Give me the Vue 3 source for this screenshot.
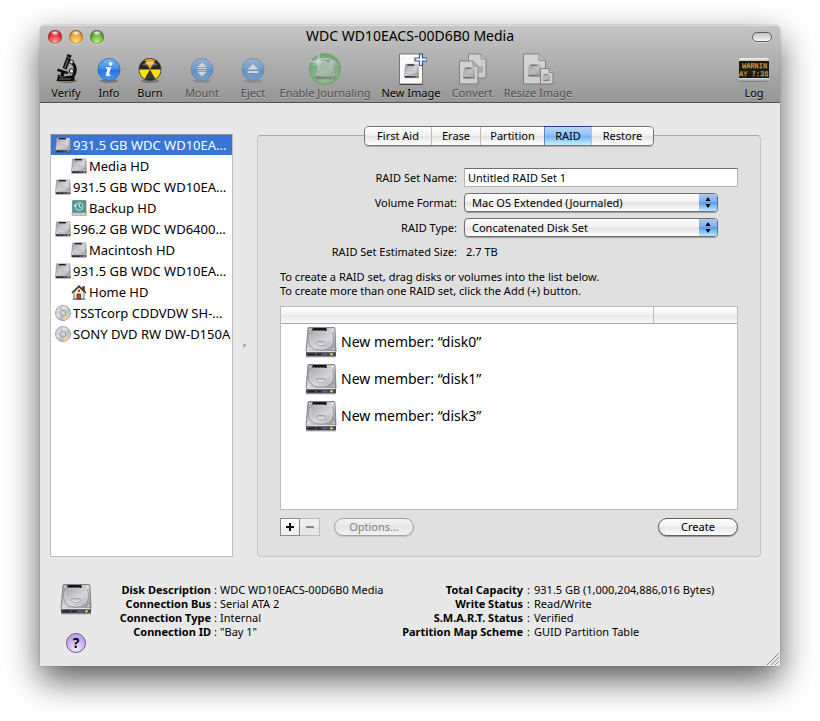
<script setup>
import { ref } from 'vue'

const tools = [
  { id: 'verify', label: 'Verify' },
  { id: 'info', label: 'Info' },
  { id: 'burn', label: 'Burn' },
  { id: 'mount', label: 'Mount', disabled: true },
  { id: 'eject', label: 'Eject', disabled: true },
  { id: 'journal', label: 'Enable Journaling', disabled: true },
  { id: 'newimage', label: 'New Image' },
  { id: 'convert', label: 'Convert', disabled: true },
  { id: 'resize', label: 'Resize Image', disabled: true }
]

const devices = [
  { name: '931.5 GB WDC WD10EA…', icon: 'disk' },
  { name: 'Media HD', icon: 'disk', child: true },
  { name: '931.5 GB WDC WD10EA…', icon: 'disk' },
  { name: 'Backup HD', icon: 'backup', child: true },
  { name: '596.2 GB WDC WD6400…', icon: 'disk' },
  { name: 'Macintosh HD', icon: 'disk', child: true },
  { name: '931.5 GB WDC WD10EA…', icon: 'disk' },
  { name: 'Home HD', icon: 'home', child: true },
  { name: 'TSSTcorp CDDVDW SH-…', icon: 'disc' },
  { name: 'SONY DVD RW DW-D150A', icon: 'disc' }
]

const selected = ref(0)
const tabs = ['First Aid', 'Erase', 'Partition', 'RAID', 'Restore']
const activeTab = ref('RAID')
const setName = ref('Untitled RAID Set 1')
const members = ['disk0', 'disk1', 'disk3']

const details = [
  [
    ['Disk Description', 'WDC WD10EACS-00D6B0 Media'],
    ['Connection Bus', 'Serial ATA 2'],
    ['Connection Type', 'Internal'],
    ['Connection ID', '"Bay 1"']
  ],
  [
    ['Total Capacity', '931.5 GB (1,000,204,886,016 Bytes)'],
    ['Write Status', 'Read/Write'],
    ['S.M.A.R.T. Status', 'Verified'],
    ['Partition Map Scheme', 'GUID Partition Table']
  ]
]
</script>

<template>
  <svg class="sprites" width="0" height="0" aria-hidden="true">
    <defs>
      <linearGradient id="g-metal" x1="0" y1="0" x2="1" y2="1">
        <stop offset="0" stop-color="#98989d" />
        <stop offset=".5" stop-color="#d2d2d7" />
        <stop offset="1" stop-color="#8f8f96" />
      </linearGradient>
      <linearGradient id="g-platter" x1="0" y1="0" x2="1" y2="1">
        <stop offset="0" stop-color="#a9a9ae" />
        <stop offset=".55" stop-color="#d6d6db" />
        <stop offset="1" stop-color="#a5a5ac" />
      </linearGradient>
      <linearGradient id="g-blue" x1="0" y1="0" x2="0" y2="1">
        <stop offset="0" stop-color="#7db8f5" />
        <stop offset=".48" stop-color="#3d8ceb" />
        <stop offset=".52" stop-color="#2273e2" />
        <stop offset="1" stop-color="#4b9df5" />
      </linearGradient>
      <radialGradient id="g-green" cx=".5" cy=".75" r=".7">
        <stop offset="0" stop-color="#8be07c" />
        <stop offset="1" stop-color="#2fa136" />
      </radialGradient>
      <linearGradient id="g-yellow" x1="0" y1="0" x2="0" y2="1">
        <stop offset="0" stop-color="#f3a41d" />
        <stop offset="1" stop-color="#e8a000" />
      </linearGradient>
      <linearGradient id="g-gloss" x1="0" y1="0" x2="0" y2="1">
        <stop offset="0" stop-color="#fff" stop-opacity=".65" />
        <stop offset="1" stop-color="#fff" stop-opacity=".05" />
      </linearGradient>
      <linearGradient id="g-case" x1="0" y1="0" x2="0" y2="1">
        <stop offset="0" stop-color="#f8f8f8" />
        <stop offset=".15" stop-color="#b4b4b4" />
        <stop offset=".85" stop-color="#dcdcdc" />
        <stop offset="1" stop-color="#777" />
      </linearGradient>
      <linearGradient id="g-disc" x1="0" y1="0" x2="1" y2="1">
        <stop offset="0" stop-color="#c9c9c9" />
        <stop offset=".35" stop-color="#ececec" />
        <stop offset=".6" stop-color="#bdbdbd" />
        <stop offset="1" stop-color="#e2e2e2" />
      </linearGradient>
    </defs>

    <symbol id="i-disk" viewBox="0 0 32 32">
      <path d="M1 30.500h30v1H1z" fill="#000" opacity=".25" />
      <path d="M1 25h30v4.500q0 1-1 1H2q-1 0-1-1z" fill="#4a4a54" />
      <path d="M3 2.500Q3 1.500 4 1.500h25q1 0 1 1L31 25.500H1z" fill="url(#g-metal)" stroke="#707076" stroke-width=".8" />
      <path d="M1.500 25h29v1.200h-29z" fill="#e0e0e5" />
      <path d="M7.500 2h14v3h-14z" fill="#161618" />
      <path d="M8.500 4.800h2M11.500 4.800h2M14.500 4.800h2M17.500 4.800h2" stroke="#d6d6d6" stroke-width=".8" />
      <path d="M4.500 7C3 15 3 24 16 24S29 15 27.500 7" fill="url(#g-platter)" stroke="#85858b" stroke-width=".8" />
      <path d="M5.300 8C4 15 4.500 23 16 23S28 15 26.700 8" fill="none" stroke="#ececf0" stroke-width=".6" />
      <path d="M11.500 16.500c0-1.200 9-1.200 9 0 0 3.800-9 3.800-9 0z" fill="#cdcdd2" stroke="#88888f" stroke-width=".8" />
      <path d="M12 17c2 2.200 6 2.200 8 0" fill="none" stroke="#f5f5f8" stroke-width=".9" />
      <circle cx="5" cy="3.700" r=".7" fill="#f8f8f8" /><circle cx="27.500" cy="3.700" r=".7" fill="#f8f8f8" />
      <circle cx="3.500" cy="23" r=".8" fill="#f8f8f8" /><circle cx="28.500" cy="23" r=".8" fill="#f8f8f8" />
      <path d="M3 27.500h7v1.800H3zM12 27.500h4v1.800h-4z" fill="#22222a" />
      <path d="M18 27.500h4v1.800h-4z" fill="#5a5aa0" />
      <circle cx="26.500" cy="28.300" r="1.200" fill="#f4e83a" />
    </symbol>

    <symbol id="i-backup" viewBox="0 0 32 32">
      <rect x="3" y="1" width="27" height="25" rx="1" fill="#4f9793" stroke="#6c8583" stroke-width="1.500" />
      <path d="M2 25h29v5q0 1-1 1H3q-1 0-1-1z" fill="#c4caca" stroke="#70787a" stroke-width=".8" />
      <circle cx="16.500" cy="13" r="7.500" fill="none" stroke="#b9dfdb" stroke-width="2.400" />
      <path d="M16.500 8v5.500l4 2" fill="none" stroke="#e8fbf9" stroke-width="2" />
      <path d="M5 10l5-1-1 6z" fill="#e6f7f5" />
      <circle cx="25" cy="28" r="1.800" fill="#ecdf3c" />
    </symbol>

    <symbol id="i-home" viewBox="0 0 32 32">
      <path d="M23 5h4v9h-4z" fill="#8e2f1f" stroke="#222" />
      <path d="M6 16 16 6l10 10v14H6z" fill="#f2ead0" stroke="#444" stroke-width="1.500" />
      <path d="M2 18 16 4l14 14" fill="none" stroke="#3a3632" stroke-width="3" />
      <circle cx="16" cy="13.500" r="2.500" fill="#b3301c" />
      <path d="M12 20h7v10h-7z" fill="#c1481b" stroke="#51220f" stroke-width="1.500" />
      <path d="M3 30.500h26" stroke="#555" stroke-width="1.500" />
    </symbol>

    <symbol id="i-disc" viewBox="0 0 32 32">
      <circle cx="16" cy="16" r="15" fill="url(#g-disc)" stroke="#858585" stroke-width="1.500" />
      <path d="M16 16 6 6q4-4 9-4z" fill="#b9cfe8" /><path d="M16 16 3 10q-2 5-.5 9z" fill="#e0c6d0" />
      <path d="M16 16l11 9q-4 5-9 5z" fill="#ead09c" /><path d="M16 16l13 6q2-5 .500-10z" fill="#b4d6c2" />
      <circle cx="16" cy="16" r="6" fill="#d4d4d4" stroke="#808080" stroke-width="1.200" />
      <circle cx="16" cy="16" r="2.600" fill="#fff" stroke="#888" />
    </symbol>

    <symbol id="i-verify" viewBox="0 0 32 32">
      <ellipse cx="17" cy="28" rx="10" ry="2" fill="#000" opacity=".25" />
      <path d="M17.500 1l4.200 1.500-1 2.600-4.200-1.500z" fill="#111" />
      <path d="M16.500 4l4.200 1.500-4 11-4.200-1.500z" fill="#111" />
      <path d="M17.800 6.500 14.800 15" fill="none" stroke="#999" stroke-width=".8" />
      <path d="M20.500 8.500c5.500 3 6.500 11 1.500 16" fill="none" stroke="#111" stroke-width="3" />
      <circle cx="21.500" cy="9" r="2" fill="#d0d0d0" stroke="#111" />
      <circle cx="21.500" cy="18" r="2.200" fill="#e0e0e0" stroke="#111" />
      <path d="M8 15.500l10.500 3.500-1 2.300L7 18z" fill="#111" />
      <path d="M11 18l4 1.200-1.500 4.500-3-1z" fill="#111" />
      <path d="M8 21.500l6 2 7-1 3.500 2v3.500H6.500l1-3z" fill="#0c0c0c" />
      <path d="M9 23l4 1.300M9 26h12" stroke="#888" stroke-width=".8" />
    </symbol>

    <symbol id="i-info" viewBox="0 0 32 32">
      <ellipse cx="16" cy="28" rx="9" ry="2" fill="#000" opacity=".25" />
      <circle cx="16" cy="16.500" r="11" fill="url(#g-blue)" stroke="#2962b5" stroke-width=".8" />
      <circle cx="17.600" cy="10.800" r="1.900" fill="#fff" />
      <path d="M13 14.200h5.200l-2 6.300q-.4 1.300 1.600.7l-.3 1.500q-5.500 1.600-4.600-1.700l1.500-5.300h-1.700z" fill="#fff" />
    </symbol>

    <symbol id="i-burn" viewBox="0 0 32 32">
      <ellipse cx="16" cy="28" rx="9" ry="2" fill="#000" opacity=".25" />
      <circle cx="16" cy="16.500" r="11" fill="#262626" stroke="#3a3a30" stroke-width="1" />
      <path d="M5.400 16.500a10.600 10.600 0 0 0 5.300 9.200h10.600a10.600 10.600 0 0 0 5.300-9.200z" fill="#383838" />
      <path d="M16 16.500 10.700 7.300a10.600 10.600 0 0 1 10.600 0z" fill="url(#g-yellow)" />
      <path d="M16 16.500H5.400a10.600 10.600 0 0 0 5.300 9.200z" fill="#f9e30a" />
      <path d="M16 16.500h10.600a10.600 10.600 0 0 1-5.300 9.200z" fill="#f9e30a" />
      <path d="M8 12a10 8 0 0 1 16 0q-8 3-16 0z" fill="url(#g-gloss)" />
    </symbol>

    <symbol id="i-mount" viewBox="0 0 32 32">
      <ellipse cx="16" cy="28" rx="9" ry="2" fill="#000" opacity=".25" />
      <circle cx="16" cy="16.500" r="11" fill="url(#g-blue)" stroke="#2962b5" stroke-width=".8" />
      <path d="M16 9.500l4.500 4.500h-9zM16 23.500l4.500-4.500h-9zM11.500 15h9v1h-9zM11.500 17.300h9v1h-9z" fill="#fff" />
    </symbol>

    <symbol id="i-eject" viewBox="0 0 32 32">
      <ellipse cx="16" cy="28" rx="9" ry="2" fill="#000" opacity=".25" />
      <circle cx="16" cy="16.500" r="11" fill="url(#g-blue)" stroke="#2962b5" stroke-width=".8" />
      <path d="M16 11l5.500 5.500h-11zM10.500 18h11v2h-11z" fill="#fff" />
    </symbol>

    <symbol id="i-journal" viewBox="0 0 32 32">
      <circle cx="16" cy="16" r="15.500" fill="url(#g-green)" stroke="#2d8b33" stroke-width=".8" />
      <path d="M3 12a14 11 0 0 1 26 0q-13 6-26 0z" fill="url(#g-gloss)" />
      <svg x="6" y="6" width="21" height="21" opacity=".65"><use href="#i-disk" /></svg>
      <path d="M9.500 0l.9 7.600 7.600.9-7.600.9-.9 7.600-.9-7.600L1 8.500l7.600-.9z" fill="#effff7" stroke="#b9efe8" stroke-width=".8" />
      <path d="M6 5l7 7M13 5l-7 7" stroke="#fff" stroke-width=".8" />
    </symbol>

    <symbol id="i-newimage" viewBox="0 0 32 32">
      <path d="M4.500 1h23v30h-23z" fill="#fafafa" stroke="#777" />
      <path d="M4.500 31.500h23" stroke="#444" stroke-width="1" />
      <svg x="9" y="10" width="15" height="16"><use href="#i-disk" /></svg>
      <path d="M24.500 1h3v4H32v3h-4.500v4.500h-3V8H20V5h4.500z" fill="#fff" stroke="#31529f" stroke-width="1.200" />
    </symbol>

    <symbol id="i-convert" viewBox="0 0 32 32">
      <path d="M12.500 1H25l5 5v19H12.500z" fill="#f1f1f1" stroke="#555" />
      <path d="M25 1v5h5" fill="#ccc" stroke="#777" />
      <path d="M3.500 8H17l5 5v18H3.500z" fill="#f8f8f8" stroke="#555" />
      <path d="M17 8v5h5" fill="#ccc" stroke="#777" />
      <svg x="7" y="14" width="12" height="12"><use href="#i-disk" /></svg>
      <path d="M23 13.500h4v6h-4z" fill="#aaa" />
    </symbol>

    <symbol id="i-resize" viewBox="0 0 32 32">
      <path d="M1.500 1H17l6.500 6.500V31h-22z" fill="#f8f8f8" stroke="#555" />
      <path d="M17 1v6.500h6.500" fill="#ccc" stroke="#777" />
      <svg x="6" y="10" width="13" height="15"><use href="#i-disk" /></svg>
      <path d="M18.500 15.500H27l4 4V31H18.500z" fill="#f8f8f8" stroke="#555" />
      <path d="M27 15.500v4h4" fill="#ccc" stroke="#777" />
      <svg x="21" y="21" width="7" height="7"><use href="#i-disk" /></svg>
    </symbol>
  </svg>

  <main class="window">
    <header class="chrome">
      <div class="titlebar">
        <div class="lights">
          <button class="light red" aria-label="Close"></button>
          <button class="light amber" aria-label="Minimize"></button>
          <button class="light green" aria-label="Zoom"></button>
        </div>
        <h1>WDC WD10EACS-00D6B0 Media</h1>
        <button class="pill" aria-label="Toggle toolbar"></button>
      </div>
      <nav class="toolbar">
        <button v-for="t in tools" :key="t.id" class="tool" :disabled="t.disabled">
          <svg class="tool-icon" aria-hidden="true"><use :href="'#i-' + t.id" /></svg>
          <span>{{ t.label }}</span>
        </button>
        <button class="tool tool-end">
          <svg class="tool-icon" viewBox="0 0 32 32" aria-hidden="true">
            <rect x="1" y="5" width="30" height="24" rx="2" fill="url(#g-case)" />
            <rect x="1" y="8" width="30" height="17" fill="#1d1a14" />
            <text x="4" y="15" class="lcd">WARNIN</text>
            <text x="1" y="23" class="lcd">AY 7:36</text>
          </svg>
          <span>Log</span>
        </button>
      </nav>
    </header>

    <div class="body">
      <ul class="sidebar">
        <li v-for="(d, i) in devices" :key="i">
          <button class="device" :class="{ child: d.child, on: selected === i }" @click="selected = i">
            <svg class="small-icon" aria-hidden="true"><use :href="'#i-' + d.icon" /></svg>
            <span>{{ d.name }}</span>
          </button>
        </li>
      </ul>

      <div class="splitter"><i class="dimple"></i></div>

      <section class="panel">
        <div class="tabs" role="tablist">
          <button v-for="t in tabs" :key="t" role="tab" class="tab" :class="{ on: activeTab === t }" :aria-selected="activeTab === t" @click="activeTab = t">{{ t }}</button>
        </div>

        <form class="fields" @submit.prevent>
          <label for="set-name">RAID Set Name:</label>
          <input id="set-name" v-model="setName" class="text-field" type="text">
          <label for="format">Volume Format:</label>
          <div class="popup">
            <select id="format"><option>Mac OS Extended (Journaled)</option></select>
            <svg class="arrows" viewBox="0 0 18 17" aria-hidden="true"><path d="M9 3l2.500 4h-5zM9 14l2.500-4h-5z" /></svg>
          </div>
          <label for="type">RAID Type:</label>
          <div class="popup">
            <select id="type"><option>Concatenated Disk Set</option></select>
            <svg class="arrows" viewBox="0 0 18 17" aria-hidden="true"><path d="M9 3l2.500 4h-5zM9 14l2.500-4h-5z" /></svg>
          </div>
          <span class="caption">RAID Set Estimated Size:</span>
          <output class="size">2.7 TB</output>
        </form>

        <p class="hint">To create a RAID set, drag disks or volumes into the list below.<br>To create more than one RAID set, click the Add (+) button.</p>

        <div class="list">
          <table>
            <thead><tr><th></th><th class="narrow"></th></tr></thead>
            <tbody>
              <tr v-for="m in members" :key="m">
                <td colspan="2">
                  <div class="member">
                    <svg class="big-icon" aria-hidden="true"><use href="#i-disk" /></svg>
                    <span>New member: “{{ m }}”</span>
                  </div>
                </td>
              </tr>
            </tbody>
          </table>
        </div>

        <div class="actions">
          <div class="stepper">
            <button aria-label="Add"><svg viewBox="0 0 8 8"><path d="M4 0v8M0 4h8" /></svg></button>
            <button aria-label="Remove" disabled><svg viewBox="0 0 8 8"><path d="M0 4h8" /></svg></button>
          </div>
          <button class="round" disabled>Options…</button>
          <button class="round create">Create</button>
        </div>
      </section>
    </div>

    <footer class="details">
      <div class="details-side">
        <svg class="big-icon" aria-hidden="true"><use href="#i-disk" /></svg>
        <button class="help" aria-label="Help">?</button>
      </div>
      <dl v-for="(group, g) in details" :key="g">
        <template v-for="row in group" :key="row[0]">
          <dt>{{ row[0] }}</dt>
          <dd><span class="colon">:</span>{{ row[1] }}</dd>
        </template>
      </dl>
      <svg class="grip" viewBox="0 0 12 12" aria-hidden="true"><path d="M0 12 12 0M4 12l8-8M8 12l4-4" /></svg>
    </footer>
  </main>
</template>

<style>
body {
  background: #fff;
}
</style>

<style scoped>
* {
  box-sizing: border-box;
}

button,
input,
select {
  font: inherit;
  color: inherit;
}

button {
  padding: 0;
  border: 0;
  background: none;
}

.sprites {
  display: block;
}

.lcd {
  font: 7px "Liberation Mono", monospace;
  fill: #efab22;
}

.window {
  margin: 25px 40px 55px;
  background: #e8e8e8;
  border-radius: 5px 5px 0 0;
  box-shadow: 0 0 1px rgba(0, 0, 0, 0.7), 0 14px 34px rgba(0, 0, 0, 0.65);
  font: 11px/14px "Noto Sans", "Open Sans", sans-serif;
  color: #000;
}

.chrome {
  border-top: 1px solid #dedede;
  border-bottom: 1px solid #515151;
  border-radius: 5px 5px 0 0;
  background: linear-gradient(#c5c5c5, #969696);
}

.titlebar {
  display: grid;
  grid-template-columns: 80px 1fr 80px;
  align-items: center;
  height: 22px;
  padding: 0 8px;
}

.lights {
  display: flex;
  gap: 7px;
}

.light {
  width: 14px;
  height: 14px;
  border-radius: 50%;
  box-shadow: 0 1px 0 rgba(255, 255, 255, 0.4), inset 0 0 2px rgba(0, 0, 0, 0.8);
}

.red {
  background: radial-gradient(ellipse 5px 3px at 50% 20%, #fff, transparent), radial-gradient(circle at 50% 90%, #ffb4b4, #e5252c 60%, #8c0c10);
}

.amber {
  background: radial-gradient(ellipse 5px 3px at 50% 20%, #fff, transparent), radial-gradient(circle at 50% 90%, #ffe98a, #ef9730 60%, #95510c);
}

.green {
  background: radial-gradient(ellipse 5px 3px at 50% 20%, #fff, transparent), radial-gradient(circle at 50% 90%, #c5f58a, #5bab34 60%, #1e5e12);
}

h1 {
  margin: 0;
  padding-bottom: 2px;
  font-size: 14px;
  font-weight: 400;
  line-height: 20px;
  text-align: center;
  white-space: nowrap;
}

.pill {
  justify-self: end;
  width: 20px;
  height: 10px;
  border: 1px solid #5c5c5c;
  border-radius: 5px;
  background: linear-gradient(#c2c2c2, #f6f6f6);
  box-shadow: 0 1px 0 rgba(255, 255, 255, 0.4);
}

.toolbar {
  display: grid;
  grid-template-columns: 44px 42px 40px 64px 38px 106px 66px 56px 76px 1fr;
  padding: 5px 0 1px 4px;
}

.tool {
  display: flex;
  flex-direction: column;
  align-items: center;
  line-height: 16px;
  text-shadow: 0 1px 0 rgba(255, 255, 255, 0.3);
  white-space: nowrap;
}

.tool:disabled {
  color: #505050;
}

.tool:disabled .tool-icon {
  opacity: 0.5;
}

.tool-end {
  justify-self: end;
  width: 52px;
}

.tool-icon,
.big-icon {
  display: block;
  flex: none;
  width: 32px;
  height: 32px;
}

.body {
  display: grid;
  grid-template-columns: 183px 24px 1fr;
  padding: 31px 19px 0 10px;
}

.sidebar {
  margin: 0;
  padding: 0;
  list-style: none;
  background: #fff;
  border: 1px solid #bebebe;
  border-top-color: #8e8e8e;
  font-size: 13px;
}

.sidebar li {
  padding-bottom: 1px;
}

.device {
  display: flex;
  align-items: center;
  gap: 2px;
  width: 100%;
  height: 20px;
  padding-left: 4px;
  line-height: 18px;
  white-space: nowrap;
}

.device.child {
  padding-left: 20px;
}

.device.on {
  background: #3875d7;
  color: #fff;
}

.small-icon {
  flex: none;
  width: 16px;
  height: 16px;
}

.splitter {
  display: grid;
  place-items: center;
}

.dimple {
  width: 4px;
  height: 4px;
  border-radius: 50%;
  background: linear-gradient(135deg, #666, #f4f4f4 80%);
}

.panel {
  margin-top: 1px;
  padding: 0 22px 20px;
  border: 1px solid #c4c4c4;
  border-top-color: #a9a9a9;
  border-radius: 4px;
  background: #e0e0e0;
}

.tabs {
  display: grid;
  grid-template-columns: 66px 49px 64px 47px 62px;
  justify-content: center;
  width: max-content;
  height: 18px;
  margin: -9px auto 0;
  border-radius: 4px;
  background: linear-gradient(#fff, #f0f0f0 48%, #e4e4e4 52%, #fff);
  box-shadow: 0 0 0 1px #747474, 0 2px 1px rgba(0, 0, 0, 0.25);
}

.tab {
  border-left: 1px solid #bdbdbd;
  line-height: 18px;
}

.tab:first-child {
  border-left: 0;
}

.tab.on {
  border-color: #5a87c6;
  background: linear-gradient(#b9d9f8, #8dc0f5 45%, #72b2f3 50%, #c5f2ff);
  box-shadow: 0 -1px 0 #2a3598;
}

.fields {
  display: grid;
  grid-template-columns: 177px 1fr;
  column-gap: 7px;
  row-gap: 6px;
  align-items: center;
  padding-top: 23px;
}

.fields label,
.caption {
  text-align: right;
}

.text-field {
  width: 100%;
  height: 19px;
  padding: 0 3px;
  border: 1px solid #b4b4b4;
  border-top-color: #6e6e6e;
  border-radius: 0;
  background: #fff;
}

.popup {
  display: grid;
  grid-template-columns: 1fr 18px;
  margin-right: 20px;
  border-radius: 4px;
  overflow: hidden;
  border: 1px solid #6f6f6f;
  background: linear-gradient(#fff, #f0f0f0 48%, #e2e2e2 52%, #fff);
  box-shadow: 0 1px 1px rgba(0, 0, 0, 0.3);
}

.popup select {
  grid-area: 1 / 1 / 2 / 3;
  height: 17px;
  padding: 0 20px 0 7px;
  border: 0;
  background: none;
  appearance: none;
}

.arrows {
  grid-area: 1 / 2;
  width: 18px;
  height: 17px;
  background: linear-gradient(#a9c9f2, #7fb0ee 45%, #5a9be9 50%, #b6ecff);
  pointer-events: none;
}

.size {
  padding-left: 2px;
}

.fields .caption,
.fields .size {
  margin-top: 2px;
}

.hint {
  margin: 11px 0 8px;
}

.list {
  min-height: 204px;
  border: 1px solid #bcbcbc;
  background: #fff;
}

table {
  width: 100%;
  border-collapse: collapse;
  table-layout: fixed;
}

th {
  height: 16px;
  padding: 0;
  border-bottom: 1px solid #a8a8a8;
  background: linear-gradient(#fff, #f2f2f2 48%, #e6e6e6 52%, #fafafa);
}

.narrow {
  width: 84px;
  border-left: 1px solid #bcbcbc;
}

td {
  padding: 2px 0 3px 24px;
}

.member {
  display: flex;
  align-items: center;
  gap: 4px;
  font-size: 14px;
}

.actions {
  display: flex;
  align-items: center;
  padding-top: 8px;
}

.stepper {
  display: flex;
  margin-right: 14px;
}

.stepper button {
  display: grid;
  place-items: center;
  width: 20px;
  height: 18px;
  border: 1px solid #8a8a8a;
  background: linear-gradient(#fff 50%, #f0f0f0 50%);
}

.stepper button:disabled {
  border-color: #bbb;
  border-left: 0;
  background: linear-gradient(#eee 50%, #e6e6e6 50%);
}

.stepper svg {
  width: 8px;
  height: 8px;
  stroke: #111;
  stroke-width: 2;
}

.stepper button:disabled svg {
  stroke: #8a8a8a;
}

.round {
  width: 80px;
  height: 18px;
  border: 1px solid #5e5e5e;
  border-radius: 9px;
  background: linear-gradient(#fff, #f0f0f0 48%, #e6e6e6 52%, #fff);
  box-shadow: 0 1px 1px rgba(0, 0, 0, 0.35);
  line-height: 16px;
}

.round:disabled {
  border-color: #a0a0a0;
  background: linear-gradient(#f4f4f4, #e6e6e6 50%, #f2f2f2);
  box-shadow: 0 1px 1px rgba(0, 0, 0, 0.15);
  color: #808080;
}

.create {
  margin-left: auto;
}

.details {
  display: grid;
  grid-template-columns: 52px 282px 1fr 12px;
  padding: 26px 1px 1px 20px;
}

.details-side {
  display: flex;
  flex-direction: column;
  align-items: center;
  gap: 18px;
  width: 32px;
  padding-bottom: 12px;
}

.help {
  width: 20px;
  height: 20px;
  border: 1px solid #6b5a84;
  border-radius: 50%;
  background: radial-gradient(circle at 50% 85%, #f2e8ff, #bfa0ee 70%, #cdb8ee);
  font-size: 14px;
  font-weight: 700;
  line-height: 18px;
}

dl {
  display: grid;
  grid-template-columns: 99px 1fr;
  align-content: start;
  margin: 0;
  white-space: nowrap;
}

dl + dl {
  grid-template-columns: 129px 1fr;
}

dt {
  justify-self: end;
  font-weight: 700;
}

dd {
  margin: 0;
}

.colon {
  display: inline-block;
  width: 9px;
  text-align: center;
}

dl + dl .colon {
  width: 11px;
}

.grip {
  align-self: end;
  width: 12px;
  height: 12px;
  fill: none;
  stroke: #8a8a8a;
}
</style>
